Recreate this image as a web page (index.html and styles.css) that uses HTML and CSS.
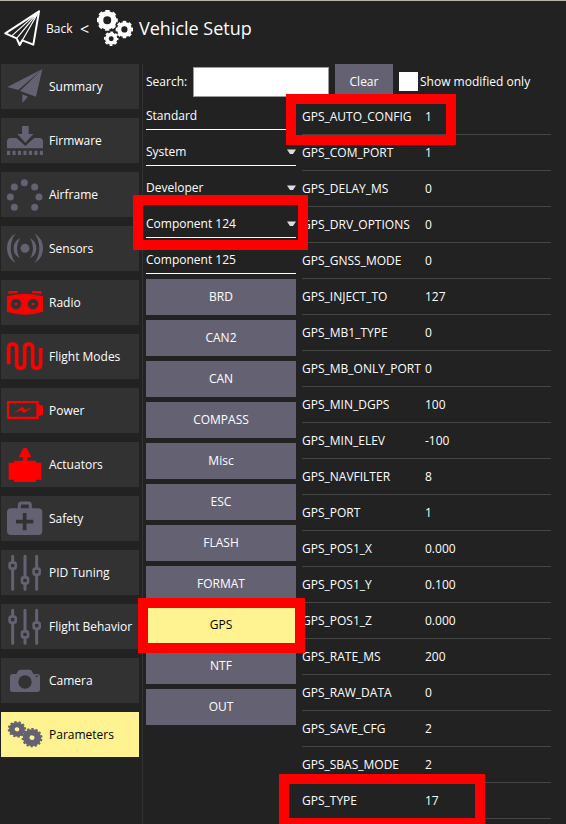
FILE: index.html
```html
<!DOCTYPE html>
<html lang="en">
<head>
<meta charset="utf-8">
<title>Vehicle Setup</title>
<link rel="stylesheet" href="styles.css">
</head>
<body>
<div class="app">
  <header class="toolbar">
    <svg class="plane" viewBox="12 27 111 114"><g fill="none" stroke="#fff" stroke-linejoin="round"><path d="M117 34 16 100l34 15 9 20 8-14 33 13z" stroke-width="6"/><path d="M117 34 50 115M117 34 59 135M117 34 67 121M117 34 36 107" stroke-width="3.500"/></g></svg>
    <span class="back">Back</span>
    <span class="lt">&lt;</span>
    <svg class="gears" viewBox="291 30 109 109" fill="none" stroke="#fff">
      <g transform="translate(322 61)"><circle r="20" stroke-width="16"/><circle r="28.500" stroke-width="7" pathLength="16" stroke-dasharray="1.150 .85" stroke-dashoffset=".57"/></g>
      <g transform="translate(374 89)"><circle r="16" stroke-width="13"/><circle r="23.500" stroke-width="6" pathLength="16" stroke-dasharray="1.150 .85" stroke-dashoffset=".57"/></g>
      <g transform="translate(334 117)"><circle r="13" stroke-width="11"/><circle r="19.500" stroke-width="5" pathLength="16" stroke-dasharray="1.150 .85" stroke-dashoffset=".57"/></g>
    </svg>
    <h1>Vehicle Setup</h1>
  </header>
  <div class="main">
    <nav class="side">
      <a class="item"><svg viewBox="3 27 144 135"><path d="m127 42-105 54 33 9zM127 42 60 108l48 17zM67 118l17 7-17 19z"/></svg>Summary</a>
      <a class="item"><svg viewBox="3 189 144 135"><path d="M66 213h20v24h14l-24 26-24-26h14zM21 280v-20q0-11 11-11h18l26 21 26-21h16q11 0 11 11v20z"/><path d="M50 246l26 24 26-24" fill="none" stroke="#323232" stroke-width="4"/><path d="M21 293.500h108" fill="none" stroke="#646272" stroke-width="13" stroke-dasharray="9.500 6.900"/></svg>Firmware</a>
      <a class="item"><svg viewBox="3 351 144 135"><circle cx="73" cy="383" r="10.500"/><circle cx="43" cy="396" r="10.500"/><circle cx="104" cy="396" r="10.500"/><circle cx="31" cy="426" r="10.500"/><circle cx="117" cy="426" r="10.500"/><circle cx="43" cy="457" r="10.500"/><circle cx="104" cy="457" r="10.500"/></svg>Airframe</a>
      <a class="item"><svg viewBox="3 18 144 135"><circle cx="75" cy="85" r="13.500"/><path d="M47 40q-26 16-26 45t26 44q-15-19-15-44t15-45M103 40q26 16 26 45t-26 44q15-19 15-44t-15-45M60 54q-19 10-19 31t19 30q-9-14-9-30t9-31M90 54q19 10 19 31t-19 30q9-14 9-30t-9-31"/></svg>Sensors</a>
      <a class="item alert"><svg viewBox="3 180 144 135"><path d="M25 213h28v5l-28 4zM96 213h28v9l-28-4zM21 229q53-16 108 0v46q-53 18-108 0z"/><circle cx="48" cy="252" r="16" fill="#323232"/><circle cx="99" cy="252" r="16" fill="#323232"/><circle cx="48" cy="252" r="4"/><circle cx="99" cy="252" r="4"/></svg>Radio</a>
      <a class="item alert"><svg viewBox="3 342 144 135"><path d="M26 433v-49q0-12 12-12t12 12v48q0 13 12 13t12-13v-48q0-12 12-12t12 12v48q0 13 12 13t12-13v-48" fill="none" stroke="#f00" stroke-width="11"/></svg>Flight Modes</a>
      <a class="item alert"><svg viewBox="3 9 144 135"><path d="M24.500 51.500h88v47h-88z" fill="none" stroke="#f00" stroke-width="7"/><path d="M115 58l14 5v26l-14 5zM41 85l26-20 9 9 22-8-26 18-9-8z"/></svg>Power</a>
      <a class="item alert"><svg viewBox="3 171 144 135"><path d="M75 188q5 0 7 5l12 24H81v10h27v6h16v51h-16v7H42v-7H26v-51h16v-6h27v-10H56l12-24q2-5 7-5"/></svg>Actuators</a>
      <a class="item"><svg viewBox="3 333 144 135"><rect x="21" y="370" width="106" height="80" rx="12"/><path d="M58 372v-12q0-6 6-6h21q6 0 6 6v12" fill="none" stroke="#646272" stroke-width="9"/><path d="M74 384v52M48 410h52" stroke="#323232" stroke-width="11"/></svg>Safety</a>
      <a class="item"><svg viewBox="3 15 144 135"><g fill="none" stroke="#646272" stroke-width="9" stroke-linecap="round"><path d="M38 34v17M38 73v60M75 34v61M75 117v16M110 34v35M110 91v42"/><g stroke-width="8"><rect x="29" y="53" width="18" height="18" rx="5"/><rect x="66" y="97" width="18" height="18" rx="5"/><rect x="101" y="71" width="18" height="18" rx="5"/></g></g></svg>PID Tuning</a>
      <a class="item"><svg viewBox="3 15 144 135"><g fill="none" stroke="#646272" stroke-width="9" stroke-linecap="round"><path d="M38 34v17M38 73v60M75 34v61M75 117v16M110 34v35M110 91v42"/><g stroke-width="8"><rect x="29" y="53" width="18" height="18" rx="5"/><rect x="66" y="97" width="18" height="18" rx="5"/><rect x="101" y="71" width="18" height="18" rx="5"/></g></g></svg>Flight Behavior</a>
      <a class="item"><svg viewBox="3 339 144 135"><path d="M38 387h11q5-13 13-13h26q8 0 12 13h12q8 0 8 8v38q0 8-8 8H38q-8 0-8-8v-38q0-8 8-8"/><circle cx="75" cy="411" r="20" fill="#323232"/><circle cx="110" cy="394" r="3" fill="#323232"/></svg>Camera</a>
      <a class="item active"><svg viewBox="3 501 144 135"><g fill="none" stroke="#646272"><g transform="translate(51 553) rotate(12) scale(1 .88)"><circle r="15.500" stroke-width="17"/><circle r="25" stroke-width="6" pathLength="24" stroke-dasharray="1.100 .9"/></g><g transform="translate(96 578) rotate(8) scale(1 .92)"><circle r="17.500" stroke-width="20"/><circle r="28.500" stroke-width="6" pathLength="28" stroke-dasharray="1.100 .9"/></g></g></svg>Parameters</a>
    </nav>
    <section class="content">
      <div class="search">
        <label for="q">Search:</label>
        <input id="q" class="query" type="text">
        <button class="clear">Clear</button>
        <span class="check"></span>
        <span>Show modified only</span>
      </div>
      <div class="columns">
        <div class="groups">
          <div class="group">Standard</div>
          <div class="group">System<svg class="arrow" viewBox="0 0 9 6"><path d="M0 .5h9L6 5H3z"/></svg></div>
          <div class="group">Developer<svg class="arrow" viewBox="0 0 9 6"><path d="M0 .5h9L6 5H3z"/></svg></div>
          <div class="group">Component 124<svg class="arrow" viewBox="0 0 9 6"><path d="M0 .5h9L6 5H3z"/></svg><i class="mark mark-component"></i></div>
          <div class="group">Component 125</div>
          <div class="buttons">
            <button>BRD</button><button>CAN2</button><button>CAN</button><button>COMPASS</button><button>Misc</button><button>ESC</button><button>FLASH</button><button>FORMAT</button>
            <button class="selected">GPS<i class="mark mark-gps"></i></button>
            <button>NTF</button><button>OUT</button>
          </div>
        </div>
        <div class="params">
          <div class="row"><span>GPS_AUTO_CONFIG</span><span>1</span><i class="mark mark-auto"></i></div>
          <div class="row"><span>GPS_COM_PORT</span><span>1</span></div>
          <div class="row"><span>GPS_DELAY_MS</span><span>0</span></div>
          <div class="row"><span>GPS_DRV_OPTIONS</span><span>0</span></div>
          <div class="row"><span>GPS_GNSS_MODE</span><span>0</span></div>
          <div class="row"><span>GPS_INJECT_TO</span><span>127</span></div>
          <div class="row"><span>GPS_MB1_TYPE</span><span>0</span></div>
          <div class="row"><span>GPS_MB_ONLY_PORT</span><span>0</span></div>
          <div class="row"><span>GPS_MIN_DGPS</span><span>100</span></div>
          <div class="row"><span>GPS_MIN_ELEV</span><span>-100</span></div>
          <div class="row"><span>GPS_NAVFILTER</span><span>8</span></div>
          <div class="row"><span>GPS_PORT</span><span>1</span></div>
          <div class="row"><span>GPS_POS1_X</span><span>0.000</span></div>
          <div class="row"><span>GPS_POS1_Y</span><span>0.100</span></div>
          <div class="row"><span>GPS_POS1_Z</span><span>0.000</span></div>
          <div class="row"><span>GPS_RATE_MS</span><span>200</span></div>
          <div class="row"><span>GPS_RAW_DATA</span><span>0</span></div>
          <div class="row"><span>GPS_SAVE_CFG</span><span>2</span></div>
          <div class="row"><span>GPS_SBAS_MODE</span><span>2</span></div>
          <div class="row"><span>GPS_TYPE</span><span>17</span><i class="mark mark-type"></i></div>
        </div>
      </div>
    </section>
  </div>
</div>
</body>
</html>
```
FILE: styles.css
```css
* { box-sizing: border-box; }
body { margin: 0; background: #222; color: #fff; font: 12px/16px "Open Sans", "Noto Sans", sans-serif; }
.app { width: 566px; height: 824px; overflow: hidden; border-top: 1px solid #b9b3aa; }
.toolbar { display: flex; align-items: center; height: 63px; padding: 0 0 9px 4px; }
.plane { width: 37px; height: 38px; }
.back { margin-left: 5px; padding-top: 2px; width: 34px; }
.lt { width: 17px; padding-top: 1px; font-size: 16px; }
.gears { width: 36px; height: 36px; }
h1 { margin: 0 0 1px 6px; font-size: 18px; line-height: 24px; font-weight: 400; }
.main { display: flex; height: 760px; }
.side { display: flex; flex-direction: column; gap: 9px; width: 142px; padding-left: 1px; flex: none; }
.item { display: flex; align-items: center; width: 138px; height: 45px; flex: none; background: #323232; white-space: nowrap; }
.item svg { width: 48px; height: 45px; flex: none; fill: #646272; }
.alert svg { fill: #f00; }
.active { background: #fff291; color: #000; }
.content { flex: 1; border-left: 1px solid #323232; padding-left: 3px; }
.search { display: flex; align-items: center; height: 35px; }
.search label { width: 47px; }
.query { width: 136px; height: 30px; margin: 0 6px 0 0; padding: 0 4px; border: 1px solid #999; background: #fff; }
button { position: relative; border: 0; padding: 0; background: #646272; color: #fff; font: inherit; }
.clear { width: 58px; height: 35px; }
.check { width: 19px; height: 19px; margin: 0 2px 0 6px; background: #fff; }
.columns { display: flex; gap: 6px; }
.groups { width: 150px; }
.group { display: flex; position: relative; align-items: center; justify-content: space-between; height: 36px; padding-top: 8px; border-bottom: 1px solid #fff; }
.group:first-child { height: 31px; padding-top: 4px; }
.arrow { width: 9px; height: 6px; fill: #ddd; }
.buttons { display: grid; gap: 5px; padding-top: 5px; }
.buttons button { height: 36px; }
.buttons .selected { background: #fff291; color: #000; }
.params { width: 249px; }
.row { position: relative; display: grid; grid-template-columns: 123px 1fr; align-items: center; height: 36px; border-bottom: 1px solid #444; white-space: nowrap; }
.mark { position: absolute; z-index: 2; border: 10px solid #f00; }
.mark-auto { left: -16px; top: -5px; width: 170px; height: 51px; }
.mark-component { left: -13px; top: -7px; width: 175px; height: 55px; }
.mark-gps { left: -8px; top: -9px; width: 167px; height: 55px; }
.mark-type { left: -23px; top: -9px; width: 206px; height: 54px; }
```
